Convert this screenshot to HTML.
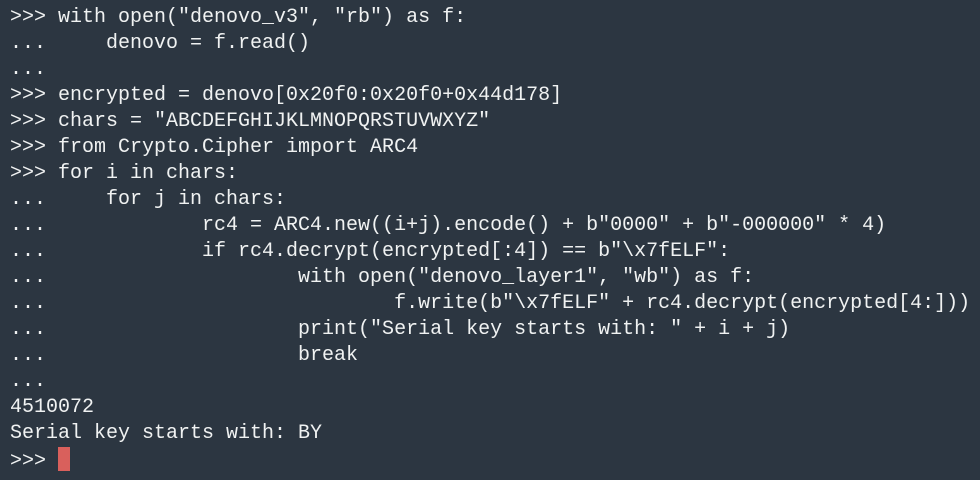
<!DOCTYPE html>
<html><head><meta charset="utf-8"><style>
html,body{margin:0;padding:0;background:#2c3641;width:980px;height:480px;overflow:hidden}
pre{margin:0;padding:5px 0 0 10px;font-family:"Liberation Mono",monospace;font-size:20px;line-height:26px;color:#f0f2f2;letter-spacing:0}
.c{display:inline-block;width:12px;height:24px;background:#d9605c;vertical-align:-5px}
</style></head><body><pre>&gt;&gt;&gt; with open("denovo_v3", "rb") as f:
...     denovo = f.read()
...
&gt;&gt;&gt; encrypted = denovo[0x20f0:0x20f0+0x44d178]
&gt;&gt;&gt; chars = "ABCDEFGHIJKLMNOPQRSTUVWXYZ"
&gt;&gt;&gt; from Crypto.Cipher import ARC4
&gt;&gt;&gt; for i in chars:
...     for j in chars:
...             rc4 = ARC4.new((i+j).encode() + b"0000" + b"-000000" * 4)
...             if rc4.decrypt(encrypted[:4]) == b"\x7fELF":
...                     with open("denovo_layer1", "wb") as f:
...                             f.write(b"\x7fELF" + rc4.decrypt(encrypted[4:]))
...                     print("Serial key starts with: " + i + j)
...                     break
...
4510072
Serial key starts with: BY
&gt;&gt;&gt; <span class="c"></span></pre></body></html>
